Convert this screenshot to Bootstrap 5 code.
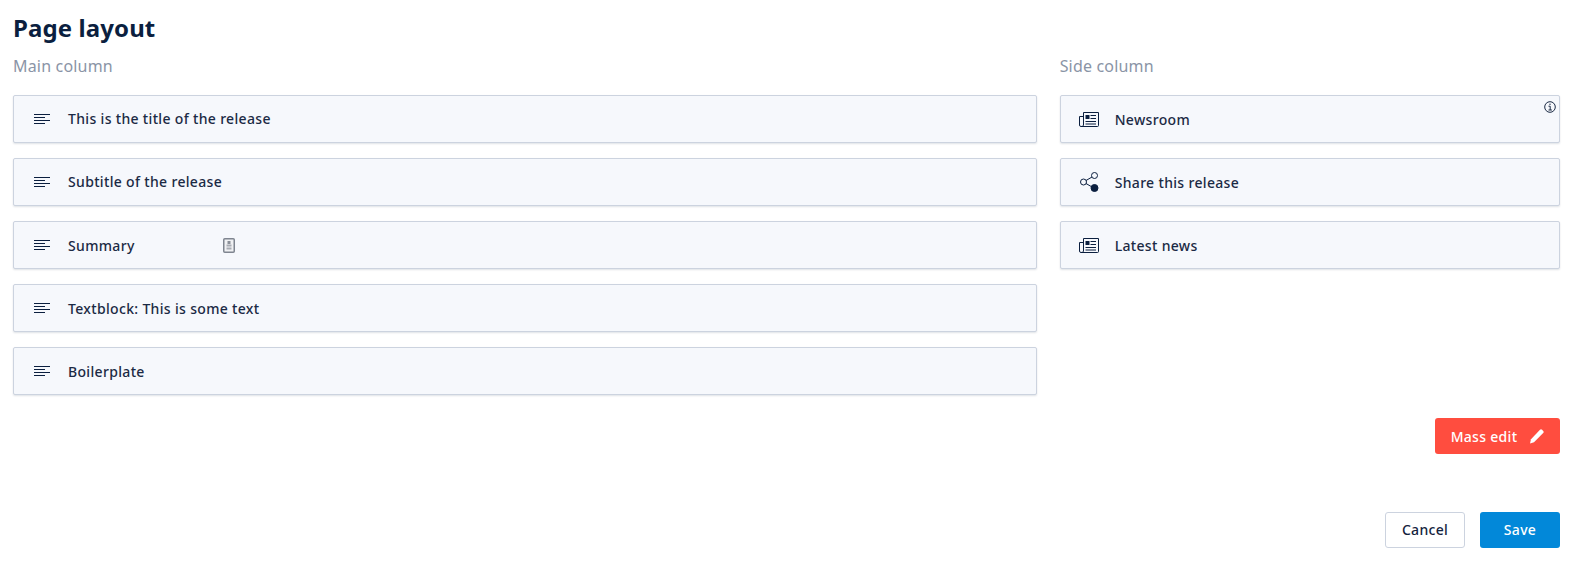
<!DOCTYPE html>
<html lang="en">
<head>
<meta charset="utf-8">
<title>Page layout</title>
<link href="https://cdn.jsdelivr.net/npm/bootstrap@5.3.0/dist/css/bootstrap.min.css" rel="stylesheet">
<style>
body{font-family:"Noto Sans",sans-serif;color:#0b1f3f;background:#fff;height:562px;overflow:hidden}
.page-wrap{padding:11px 11px 0 13px}
.page-title{font-size:24px;line-height:33px;font-weight:700;color:#0b1f3f;margin:0;letter-spacing:.1px}
.col-title{font-size:16px;line-height:22px;color:#8a94a6;margin:0;letter-spacing:.18px}
.main-col{width:1025px}
.side-col{width:501px}
.col-gap{gap:23px}
.head-gap{margin-top:11px}
.block-stack{gap:15px;margin-top:18px}
.block-item{height:48px;background:#f6f8fc;border:1px solid #ccd3df;border-radius:2px;box-shadow:0 1px 2px rgba(30,50,80,.14);padding-left:20px;position:relative}
.side-col .block-item{padding-left:18px}
.block-name{font-size:14px;font-weight:500;letter-spacing:.33px;color:#1b2a44;line-height:20px}
.icon-slot{width:34px;flex:none;display:flex}
.side-col .icon-slot{width:36px}
.side-col .block-name,.main-col .block-item:nth-child(n+3) .block-name{padding-top:1px}
.share-glyph{margin-left:1px}
.lock-icon{margin-left:88px}
.info-icon{position:absolute;top:5px;right:3px}
.btn-mass{background:#ff4d3f;color:#fff;border:0;width:125px;height:36px;font-size:14px;font-weight:500;letter-spacing:.3px;border-radius:3px;padding:0;gap:12px}
.btn-cancel,.btn-save{width:80px;height:36px;font-size:14px;font-weight:500;letter-spacing:.3px;border-radius:3px;padding:0 0 1px}
.btn-cancel{background:#fff;border:1px solid #ccd3df;color:#14233d}
.btn-save{background:#0288d9;border:0;color:#fff}
.mass-row{margin-top:23px}
.foot-row{margin-top:58px;gap:15px}
</style>
</head>
<body>
<div class="page-wrap">
  <h1 class="page-title">Page layout</h1>
  <div class="d-flex col-gap head-gap">
    <div class="main-col">
      <p class="col-title">Main column</p>
      <div class="d-flex flex-column block-stack">
        <div class="block-item d-flex align-items-center"><span class="icon-slot"><svg width="17" height="12" viewBox="0 0 17 12" stroke="#0b1f3f" fill="none"><path d="M0 1.5h16M0 4.5h11M0 7.5h16M0 10.5h11"/></svg></span><span class="block-name">This is the title of the release</span></div>
        <div class="block-item d-flex align-items-center"><span class="icon-slot"><svg width="17" height="12" viewBox="0 0 17 12" stroke="#0b1f3f" fill="none"><path d="M0 1.5h16M0 4.5h11M0 7.5h16M0 10.5h11"/></svg></span><span class="block-name">Subtitle of the release</span></div>
        <div class="block-item d-flex align-items-center"><span class="icon-slot"><svg width="17" height="12" viewBox="0 0 17 12" stroke="#0b1f3f" fill="none"><path d="M0 1.5h16M0 4.5h11M0 7.5h16M0 10.5h11"/></svg></span><span class="block-name">Summary</span><svg class="lock-icon" width="12" height="15" viewBox="0 0 12 15"><rect x=".75" y=".75" width="10.5" height="13.5" rx="1" fill="#f0f1f3" stroke="#7f8590" stroke-width="1.5"/><rect x="4.5" y="3" width="3" height="3" fill="#8a8f98"/><path d="M3.5 6.5h5v2h-5zM3.5 9.5h5v2h-5z" fill="#a8acb3"/></svg></div>
        <div class="block-item d-flex align-items-center"><span class="icon-slot"><svg width="17" height="12" viewBox="0 0 17 12" stroke="#0b1f3f" fill="none"><path d="M0 1.5h16M0 4.5h11M0 7.5h16M0 10.5h11"/></svg></span><span class="block-name">Textblock: This is some text</span></div>
        <div class="block-item d-flex align-items-center"><span class="icon-slot"><svg width="17" height="12" viewBox="0 0 17 12" stroke="#0b1f3f" fill="none"><path d="M0 1.5h16M0 4.5h11M0 7.5h16M0 10.5h11"/></svg></span><span class="block-name">Boilerplate</span></div>
      </div>
    </div>
    <div class="side-col">
      <p class="col-title">Side column</p>
      <div class="d-flex flex-column block-stack">
        <div class="block-item d-flex align-items-center"><span class="icon-slot"><svg width="20" height="15" viewBox="0 0 20 15" fill="none" stroke="#0b1f3f"><path d="M4.5.5h15v13a1 1 0 0 1-1 1H2M4.500 4.500H.5V13A1.500 1.500 0 0 0 2 14.500 2 2 0 0 0 4.500 13V.5"/><rect x="6.500" y="3" width="4" height="4" fill="#0b1f3f" stroke="none"/><path d="M11.500 3.500H17M11.500 6.500H17M6.500 9.500H17M6.500 12H17"/></svg></span><span class="block-name">Newsroom</span><svg class="info-icon" width="12" height="12" viewBox="0 0 12 12" fill="none" stroke="#1b2a44"><circle cx="6" cy="6" r="5.300"/><path d="M4.500 5.200H6.200V9M4.500 9h3.400"/><circle cx="6" cy="3.200" r=".7" fill="#1b2a44" stroke="none"/></svg></div>
        <div class="block-item d-flex align-items-center"><span class="icon-slot"><svg class="share-glyph" width="20" height="20" viewBox="0 0 20 20" fill="none" stroke="#0b1f3f"><circle cx="14.500" cy="3.500" r="3"/><circle cx="3.500" cy="10" r="3"/><circle cx="14.500" cy="16" r="3.500" fill="#0b1f3f"/><path d="M6 8.500 12 5M6 11.500l6 3.500"/></svg></span><span class="block-name">Share this release</span></div>
        <div class="block-item d-flex align-items-center"><span class="icon-slot"><svg width="20" height="15" viewBox="0 0 20 15" fill="none" stroke="#0b1f3f"><path d="M4.500.5h15v13a1 1 0 0 1-1 1H2M4.500 4.500H.5V13A1.500 1.500 0 0 0 2 14.500 2 2 0 0 0 4.500 13V.5"/><rect x="6.500" y="3" width="4" height="4" fill="#0b1f3f" stroke="none"/><path d="M11.500 3.500H17M11.500 6.500H17M6.500 9.500H17M6.500 12H17"/></svg></span><span class="block-name">Latest news</span></div>
      </div>
    </div>
  </div>
  <div class="d-flex justify-content-end mass-row">
    <button type="button" class="btn btn-mass d-flex align-items-center justify-content-center">Mass edit <svg width="15" height="15" viewBox="0 0 15 15" fill="#fff"><path d="M11 .8a1.500 1.500 0 0 1 2.100 0l1.100 1.100a1.500 1.500 0 0 1 0 2.100L5 13.200 1 14.500l1-4.200z"/></svg></button>
  </div>
  <div class="d-flex justify-content-end foot-row">
    <button type="button" class="btn btn-cancel">Cancel</button>
    <button type="button" class="btn btn-save">Save</button>
  </div>
</div>
</body>
</html>
